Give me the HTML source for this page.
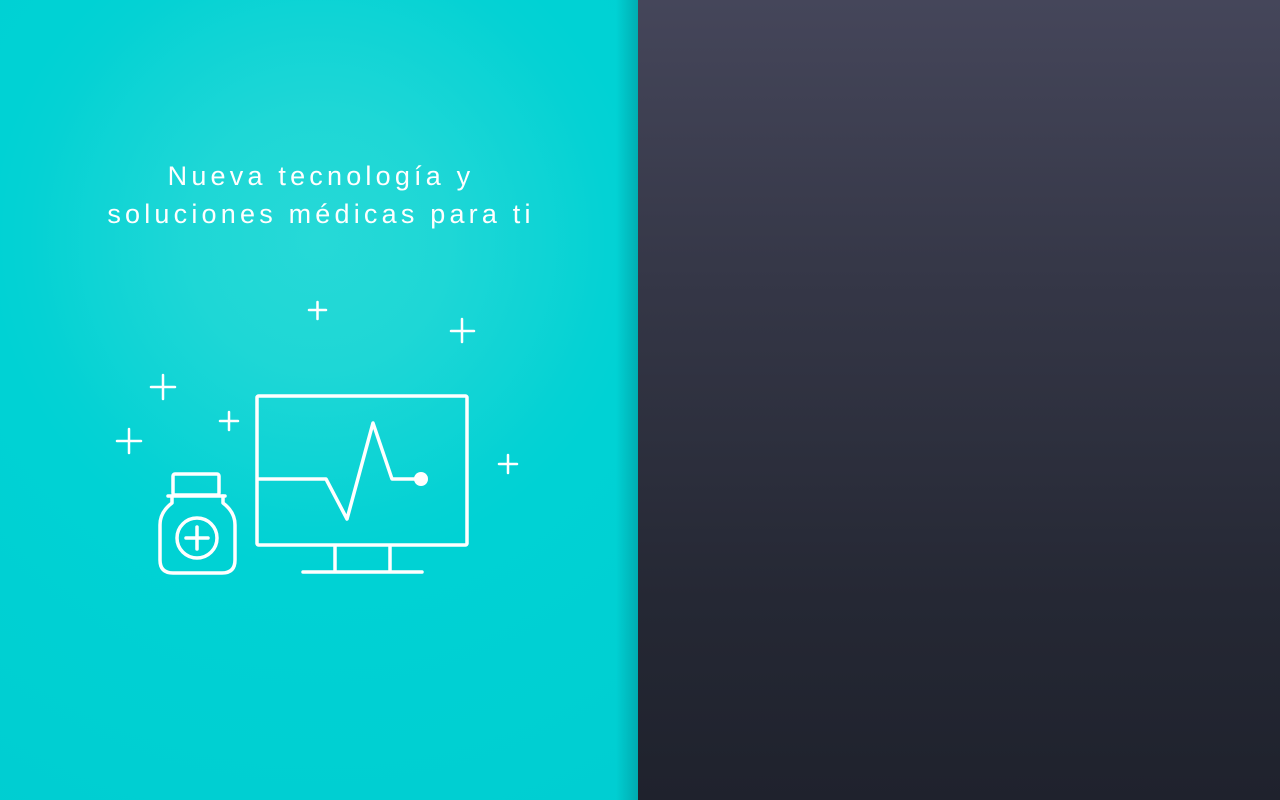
<!DOCTYPE html>
<html><head><meta charset="utf-8">
<style>
html,body{margin:0;padding:0;width:1280px;height:800px;overflow:hidden}
.left{position:absolute;left:0;top:0;width:638px;height:800px;
background:radial-gradient(circle at 318px 240px, #26d9d7 0px, #1ed7d6 130px, #10d4d5 220px, #04d2d4 290px, #00d2d4 330px, #00ccd0 800px);}
.left:after{content:"";position:absolute;right:0;top:0;width:22px;height:800px;background:linear-gradient(to right,rgba(0,0,0,0),rgba(0,80,90,0.28));}
.right{position:absolute;left:638px;top:0;width:642px;height:800px;background:linear-gradient(to bottom,#45465a,#353747 35%,#252834 75%,#1f222d);}
.t{position:absolute;left:0;width:638px;text-align:center;color:#fff;font-family:"Liberation Sans",sans-serif;font-size:27px;letter-spacing:4.2px;line-height:38px;top:157px;padding-left:4px;box-sizing:border-box}
svg{position:absolute;left:0;top:0}
</style></head><body>
<div class="left"></div>
<div class="right"></div>
<div class="t">Nueva tecnología y<br>soluciones médicas para ti</div>
<svg width="640" height="800" fill="none" stroke="#fff" stroke-width="3.5" stroke-linecap="round" stroke-linejoin="round">
<rect x="257" y="396" width="210" height="149" rx="1.5"/>
<polyline points="259,479 326,479 347,519 373,423 392,479 420,479"/>
<circle cx="421" cy="479" r="7" fill="#fff" stroke="none"/>
<line x1="335" y1="547" x2="335" y2="571"/><line x1="390" y1="547" x2="390" y2="571"/>
<line x1="303" y1="572" x2="422" y2="572"/>
<rect x="173" y="474" width="46" height="21" rx="2"/>
<line x1="168" y1="496" x2="225" y2="496"/>
<path d="M172,496 L172,503 Q160,512 160,525 L160,560 Q160,573 173,573 L222,573 Q235,573 235,560 L235,525 Q235,512 223,503 L223,496"/>
<circle cx="197" cy="538" r="20"/>
<line x1="186" y1="538" x2="208" y2="538"/><line x1="197" y1="527" x2="197" y2="549"/>
<g stroke-width="2.5">
<path d="M309,310h17M317.5,302v17"/>
<path d="M451,331h23M462,319v23"/>
<path d="M151,387h24M163,375v24"/>
<path d="M220,421h18M229,412v18"/>
<path d="M117,441h24M129,429v24"/>
<path d="M499,464h18M508,455v18"/>
</g>
</svg>
</body></html>
